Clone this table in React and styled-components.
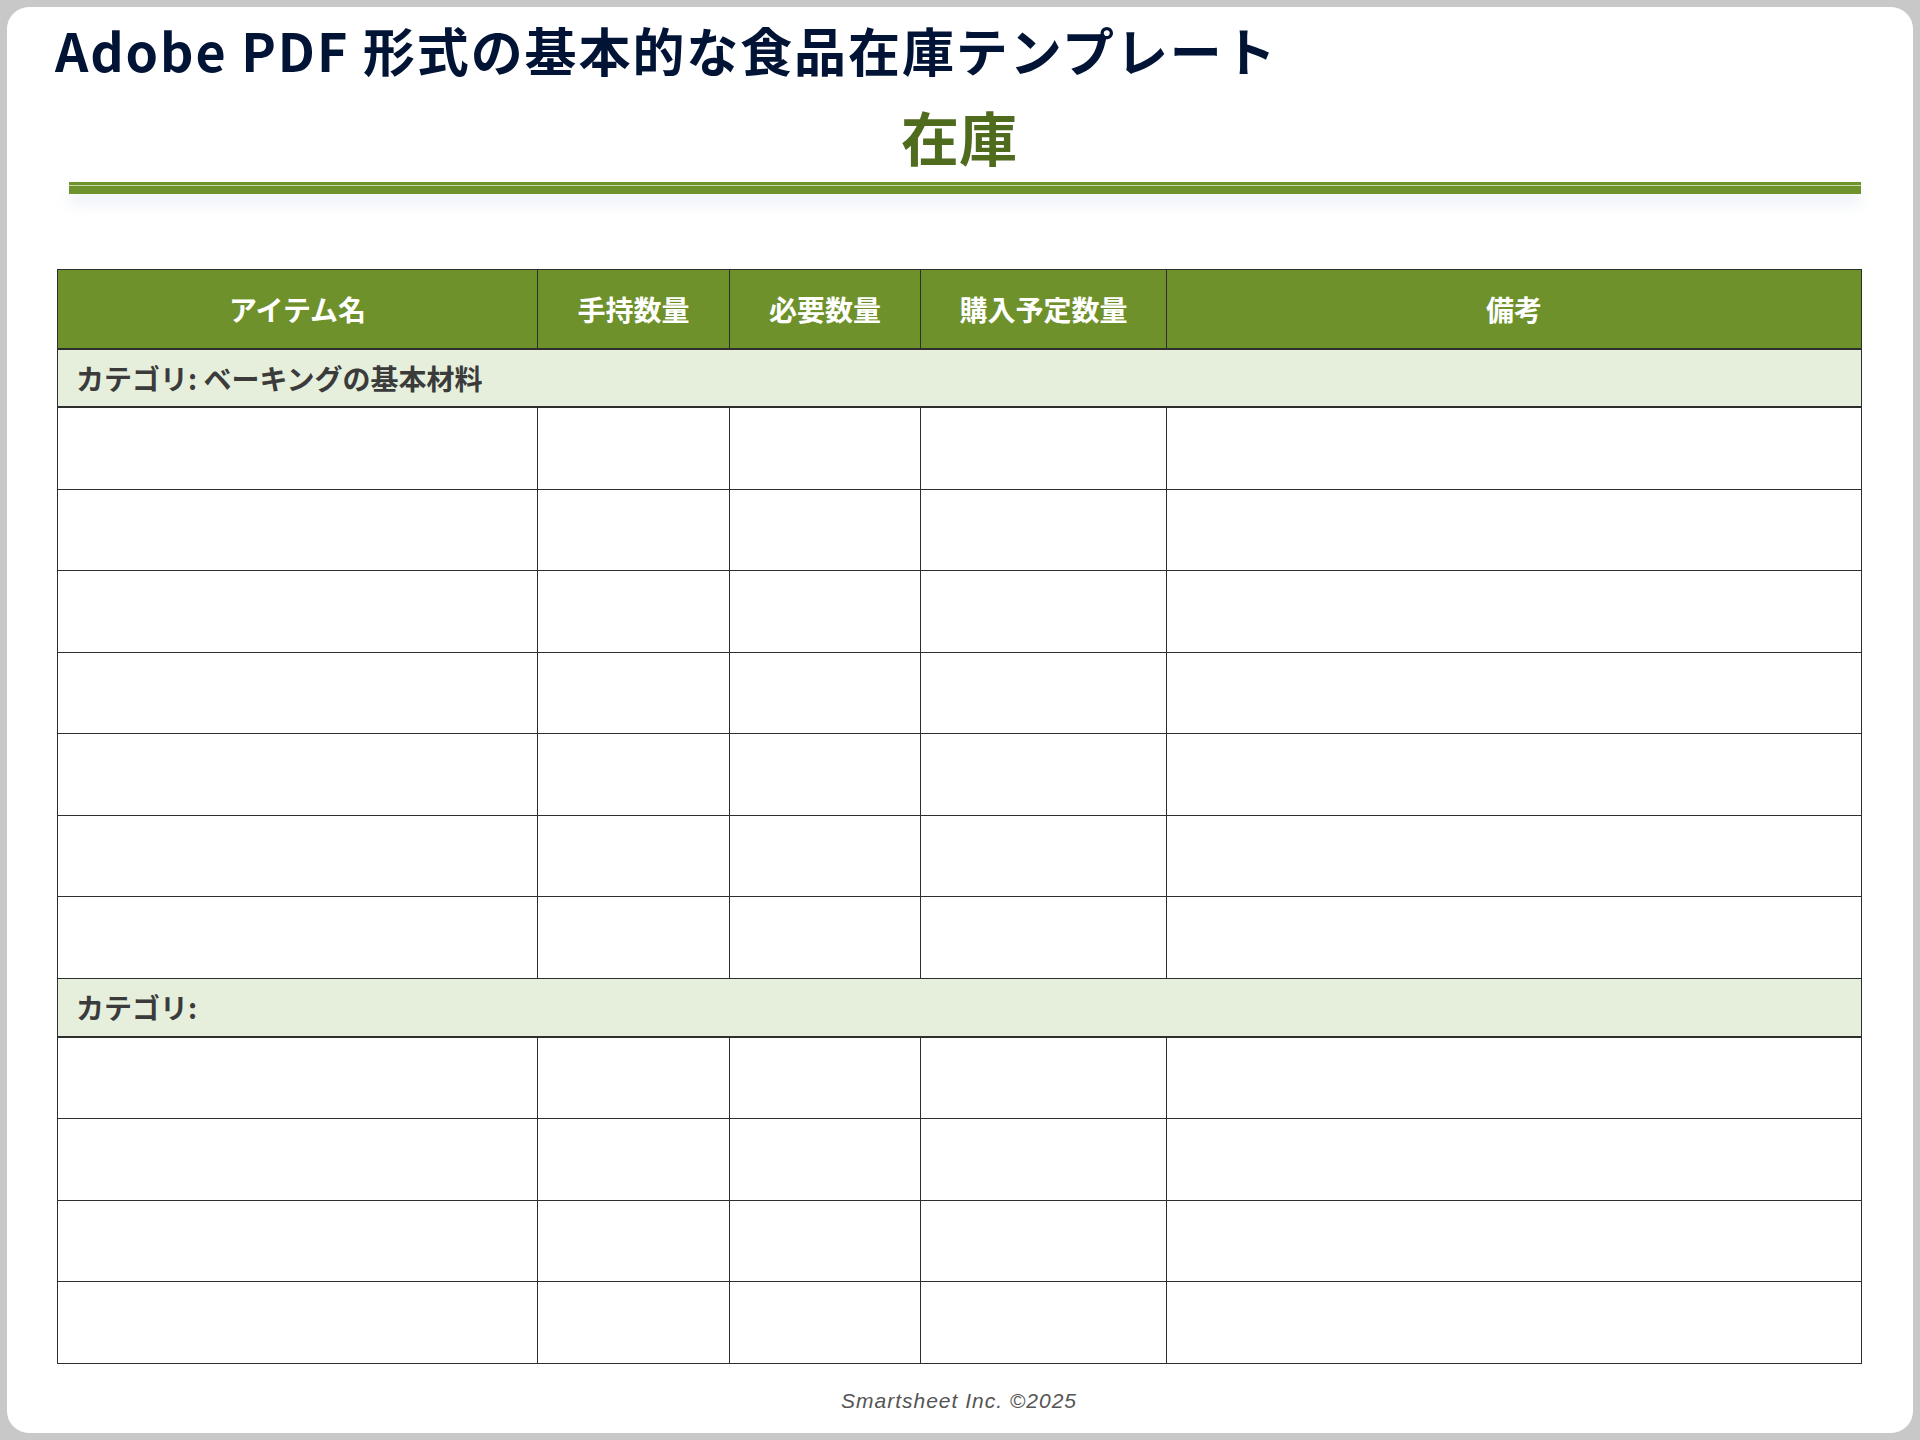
import React from 'react';
import styled, { createGlobalStyle } from 'styled-components';

const GlobalStyle = createGlobalStyle`
  html, body {
    margin: 0;
    padding: 0;
    background: #c8c8c8;
  }
  body {
    font-family: "Noto Sans CJK JP", "Noto Sans", sans-serif;
  }
`;

const Page = styled.div`
  width: 1920px;
  height: 1440px;
  padding: 7px;
  box-sizing: border-box;
`;

const Sheet = styled.main`
  height: 100%;
  background: #fff;
  border-radius: 22px;
  padding: 17px 52px 0 50px;
  box-sizing: border-box;
  display: flex;
  flex-direction: column;
`;

const DocTitle = styled.h1`
  margin: 0 0 0 -2px;
  font-size: 52px;
  line-height: 52px;
  font-weight: 700;
  color: #011435;
  letter-spacing: 1.9px;
`;

const Heading = styled.h2`
  margin: 31px 0 0;
  text-align: center;
  font-size: 58px;
  line-height: 58px;
  font-weight: 700;
  color: #4f6c1e;
`;

const Rule = styled.div`
  margin: 17px 0 0 12px;
  height: 12px;
  box-sizing: border-box;
  border-top: 3px solid #6e922c;
  border-bottom: 8px solid #6e922c;
  background: #c9d9ae;
  box-shadow: 0 10px 14px rgba(210, 222, 235, 0.45);
`;

const Table = styled.table`
  margin-top: 75px;
  width: 100%;
  border-collapse: collapse;
  table-layout: fixed;
`;

const HeadCell = styled.th`
  height: 78px;
  padding: 0;
  background: #6e912b;
  color: #fff;
  font-size: 28px;
  font-weight: 700;
  text-align: center;
  border: 1px solid #2e2e2e;
  border-bottom-width: 2px;
`;

const CategoryCell = styled.td`
  height: ${p => p.$h}px;
  padding: 0 0 0 18px;
  background: #e6efdc;
  color: #3b3b3b;
  font-size: 28px;
  font-weight: 700;
  border: 1px solid #2e2e2e;
  border-bottom-width: 2px;
`;

const Cell = styled.td`
  height: 80.5px;
  padding: 0;
  border: 1px solid #2e2e2e;
`;

const Footer = styled.footer`
  margin-top: 25px;
  text-align: center;
  font-family: "Liberation Sans", Arial, sans-serif;
  font-style: italic;
  font-size: 21px;
  letter-spacing: 1px;
  color: #555;
`;

const columns = [
  { label: 'アイテム名', width: 480 },
  { label: '手持数量', width: 192 },
  { label: '必要数量', width: 191 },
  { label: '購入予定数量', width: 246 },
  { label: '備考', width: 695 },
];

const sections = [
  { title: 'カテゴリ: ベーキングの基本材料', rows: 7, height: 56 },
  { title: 'カテゴリ:', rows: 4, height: 57 },
];

const InventoryTable = () => (
  <Table>
    <colgroup>
      {columns.map(c => (
        <col key={c.label} style={{ width: c.width }} />
      ))}
    </colgroup>
    <thead>
      <tr>
        {columns.map(c => (
          <HeadCell key={c.label}>{c.label}</HeadCell>
        ))}
      </tr>
    </thead>
    <tbody>
      {sections.map((section, si) => (
        <React.Fragment key={si}>
          <tr>
            <CategoryCell colSpan={columns.length} $h={section.height}>
              {section.title}
            </CategoryCell>
          </tr>
          {Array.from({ length: section.rows }).map((_, ri) => (
            <tr key={ri}>
              {columns.map(c => (
                <Cell key={c.label} />
              ))}
            </tr>
          ))}
        </React.Fragment>
      ))}
    </tbody>
  </Table>
);

const App = () => {
  return (
    <>
      <GlobalStyle />
      <Page>
        <Sheet>
          <DocTitle>Adobe PDF 形式の基本的な食品在庫テンプレート</DocTitle>
          <Heading>在庫</Heading>
          <Rule />
          <InventoryTable />
          <Footer>Smartsheet Inc. ©2025</Footer>
        </Sheet>
      </Page>
    </>
  );
};

export default App;
